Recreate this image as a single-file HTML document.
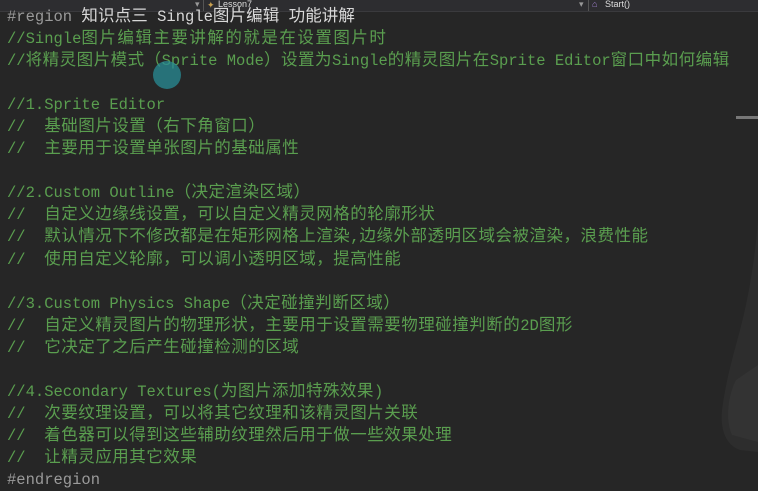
<!DOCTYPE html>
<html><head><meta charset="utf-8"><style>
html,body{margin:0;padding:0;width:758px;height:478px;overflow:hidden;background:#262626;}
#top{position:absolute;left:0;top:0;width:758px;height:11px;background:#2d2d30;border-bottom:1px solid #3a3a3d;font:9px "Liberation Sans",sans-serif;color:#ddd;}
#code{position:absolute;left:7px;top:6px;font:15.5px/22.05px "Liberation Mono","Noto Sans CJK SC",monospace;color:#5a9e4f;white-space:pre;}
.c{display:inline-block;width:17px;text-align:left;font-size:16.5px;line-height:22px;vertical-align:top;}
.l1 .c{width:18px}
.g{color:#9a9a9a}.w{color:#d8d8d8}.w .c{width:16.6px}
</style></head><body>
<div id="top"><span style="position:absolute;left:195px;top:-1px;color:#999">▾</span><span style="position:absolute;left:203px;top:0;width:1px;height:11px;background:#555"></span><span style="position:absolute;left:207px;top:0;color:#c8a050">✦</span><span style="position:absolute;left:218px;top:-1px">Lesson7</span><span style="position:absolute;left:579px;top:-1px;color:#999">▾</span><span style="position:absolute;left:588px;top:0;width:1px;height:11px;background:#555"></span><span style="position:absolute;left:592px;top:-1px;color:#a080d0">⌂</span><span style="position:absolute;left:605px;top:-1px">Start()</span></div>
<div style="position:absolute;left:736px;top:116px;width:22px;height:3px;background:#777"></div>
<svg style="position:absolute;left:700px;top:220px" width="58" height="240"><path d="M58 0 C55 40 48 80 40 110 C32 140 26 160 22 190 C20 210 26 225 40 230 L58 232 Z" fill="#2d2d2d"/><path d="M36 160 C28 175 25 200 32 215 L58 222 L58 145 Z" fill="#333"/></svg>
<div id="code"><span class="g">#region </span><span class="w">知识点三 Single图片编辑 功能讲解</span>
<span class="l1">//Single图片编辑主要讲解的就是在设置图片时</span>
//将精灵图片模式（Sprite Mode）设置为Single的精灵图片在Sprite Editor窗口中如何编辑

//1.Sprite Editor
//  基础图片设置（右下角窗口）
//  主要用于设置单张图片的基础属性

//2.Custom Outline（决定渲染区域）
//  自定义边缘线设置，可以自定义精灵网格的轮廓形状
//  默认情况下不修改都是在矩形网格上渲染,边缘外部透明区域会被渲染，浪费性能
//  使用自定义轮廓，可以调小透明区域，提高性能

//3.Custom Physics Shape（决定碰撞判断区域）
//  自定义精灵图片的物理形状，主要用于设置需要物理碰撞判断的2D图形
//  它决定了之后产生碰撞检测的区域

//4.Secondary Textures(为图片添加特殊效果)
//  次要纹理设置，可以将其它纹理和该精灵图片关联
//  着色器可以得到这些辅助纹理然后用于做一些效果处理
//  让精灵应用其它效果
<span class="g">#endregion</span></div>
<div style="position:absolute;left:153px;top:61px;width:28px;height:28px;border-radius:50%;background:rgba(40,140,150,0.75)"></div>
<script>
(function(){var w=document.createTreeWalker(document.getElementById('code'),NodeFilter.SHOW_TEXT);var n=[],t;while(t=w.nextNode())n.push(t);
n.forEach(function(x){var s=x.nodeValue;if(!/[^\x00-\x7f]/.test(s))return;var f=document.createDocumentFragment(),buf='';
for(var ch of s){if(ch.charCodeAt(0)>127){if(buf){f.appendChild(document.createTextNode(buf));buf='';}var sp=document.createElement('span');sp.className='c';sp.textContent=ch;f.appendChild(sp);}else buf+=ch;}
if(buf)f.appendChild(document.createTextNode(buf));x.parentNode.replaceChild(f,x);});})();
</script>
</body></html>
